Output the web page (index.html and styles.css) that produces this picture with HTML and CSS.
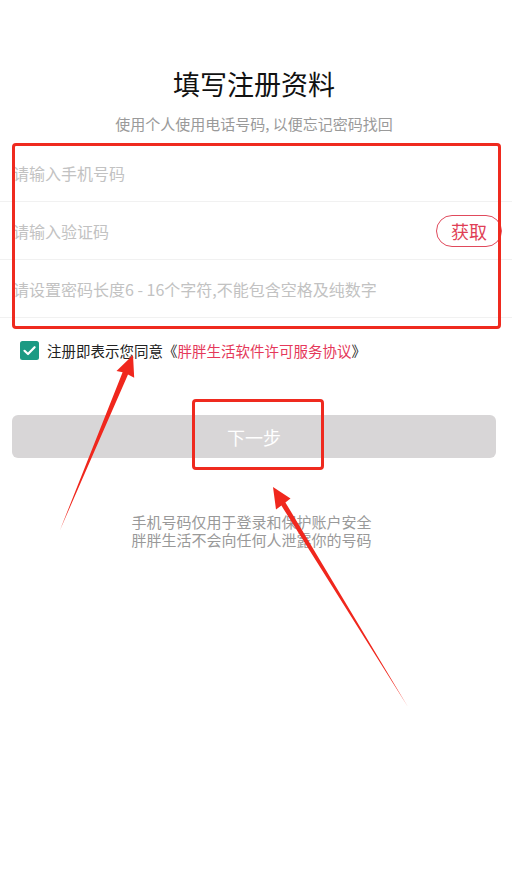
FILE: index.html
```html
<!DOCTYPE html>
<html lang="zh-CN">
<head>
  <meta charset="UTF-8">
  <title>填写注册资料</title>
  <link rel="stylesheet" href="styles.css">
</head>
<body>
  <div class="page">
    <h1 class="title">填写注册资料</h1>
    <p class="subtitle">使用个人使用电话号码, 以便忘记密码找回</p>

    <div class="form">
      <div class="row"><span class="hint">请输入手机号码</span></div>
      <div class="row">
        <span class="hint">请输入验证码</span>
        <button class="code-btn">获取</button>
      </div>
      <div class="row"><span class="hint">请设置密码长度6 - 16个字符,不能包含空格及纯数字</span></div>
    </div>

    <div class="agree">
      <span class="check">
        <svg width="19" height="19" viewBox="0 0 19 19">
          <rect width="19" height="19" rx="2.5" fill="#1c9a83"/>
          <path d="M4.5 9.8 L8 13 L14.6 6.2" fill="none" stroke="#fff" stroke-width="2.2" stroke-linecap="round" stroke-linejoin="round"/>
        </svg>
      </span>
      <span class="agree-text">注册即表示您同意《<a class="link">胖胖生活软件许可服务协议</a>》</span>
    </div>

    <button class="next">下一步</button>

    <p class="note">手机号码仅用于登录和保护账户安全<br>胖胖生活不会向任何人泄露你的号码</p>

    <!-- 标注 -->
    <div class="mark mark-form"></div>
    <div class="mark mark-next"></div>
    <svg class="arrows" width="512" height="887" viewBox="0 0 512 887">
      <polygon fill="#f0271d" points="60,530 122.6,372.2 116.5,371 133,355 134.2,377.8 128,374.6"/>
      <polygon fill="#f0271d" points="408,707 281.4,505.6 276,509.5 273,487 290.5,498.6 285.4,502.4"/>
    </svg>
  </div>
</body>
</html>
```
FILE: styles.css
```css
body {
  margin: 0;
  background: #fff;
  font-family: "Noto Sans CJK SC", "Noto Sans", sans-serif;
}

.page {
  position: relative;
  width: 512px;
  height: 887px;
  overflow: hidden;
}

.title {
  margin: 0;
  padding: 66px 4px 0 0;
  font-size: 27px;
  line-height: 36px;
  font-weight: 400;
  color: #111;
  text-align: center;
}

.subtitle {
  margin: 12px 0 0;
  padding-right: 4px;
  font-size: 15px;
  line-height: 20px;
  color: #9a9a9a;
  text-align: center;
}

.form {
  margin-top: 10px;
}

.row {
  height: 57px;
  border-bottom: 1px solid #f1f1f1;
  display: flex;
  align-items: center;
  justify-content: space-between;
  padding: 0 10px 0 13px;
}

.hint {
  font-size: 16px;
  color: #c2c2c2;
}

.code-btn {
  width: 66px;
  height: 32px;
  border: 1.5px solid #e04a5c;
  border-radius: 16px;
  background: #fff;
  color: #e03f56;
  font-family: inherit;
  font-size: 18px;
  padding: 0;
}

.agree {
  display: flex;
  align-items: center;
  margin: 23px 0 0 20px;
  height: 19px;
}

.check {
  display: flex;
  width: 19px;
  height: 19px;
}

.agree-text {
  margin-left: 8px;
  font-size: 14.5px;
  color: #222;
}

.link {
  color: #e5385a;
}

.next {
  display: block;
  width: 484px;
  height: 43px;
  margin: 55px 0 0 12px;
  border: none;
  border-radius: 6px;
  background: #d8d6d7;
  color: #fff;
  font-family: inherit;
  font-size: 18px;
}

.note {
  margin: 55px 0 0;
  padding-right: 9px;
  font-size: 15px;
  line-height: 18px;
  color: #999;
  text-align: center;
}

/* 标注框和箭头 */
.mark {
  position: absolute;
  border: 3.5px solid #ef2a1f;
  border-radius: 4px;
  box-sizing: border-box;
}

.mark-form {
  left: 12px;
  top: 143px;
  width: 489px;
  height: 186px;
}

.mark-next {
  left: 192px;
  top: 399px;
  width: 132px;
  height: 71px;
}

.arrows {
  position: absolute;
  left: 0;
  top: 0;
}
```
